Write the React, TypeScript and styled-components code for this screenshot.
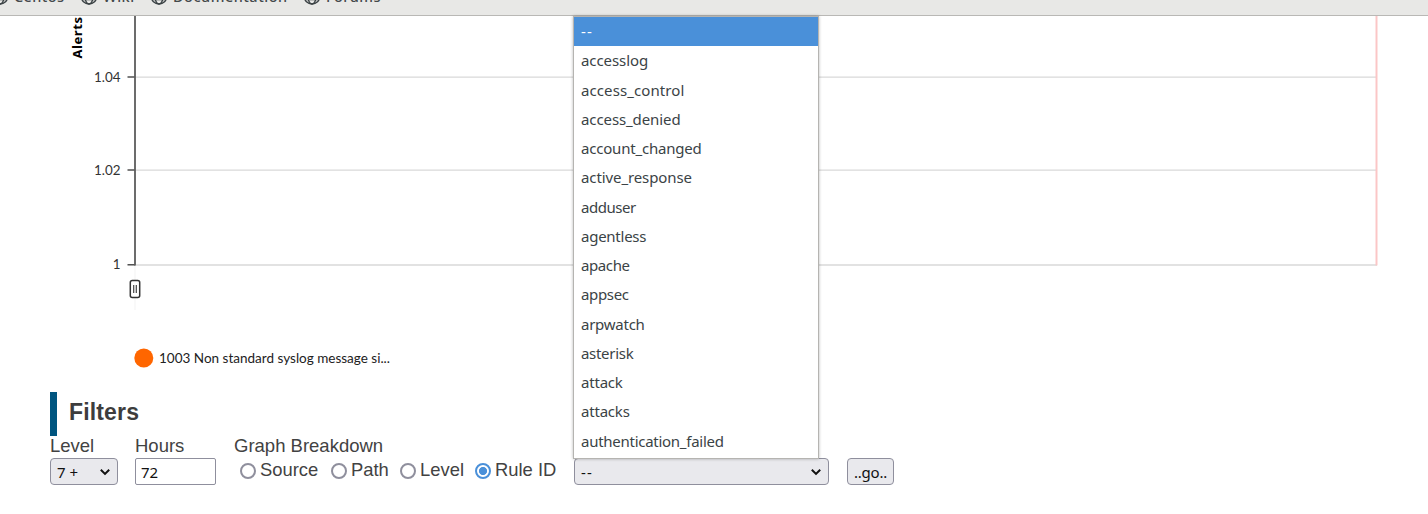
import React from "react";
import styled, { createGlobalStyle } from "styled-components";

const GlobalStyle = createGlobalStyle`
  * { box-sizing: border-box; }
  body { margin: 0; background: #fff; overflow: hidden; }
`;

const Page = styled.div`
  width: 1428px;
  height: 514px;
  overflow: hidden;
  background: #fff;
  font-family: "Liberation Sans", Arial, sans-serif;
  color: #424242;
`;

const BookmarksBar = styled.nav`
  height: 16px;
  display: flex;
  align-items: flex-end;
  background: #e8e8e6;
  border-bottom: 1px solid #b9b8b5;
  overflow: hidden;
  padding-bottom: 9px;
`;

const Bookmark = styled.a<{ $width: number; $spacing: number }>`
  flex: none;
  width: ${(p) => p.$width}px;
  height: 18px;
  display: flex;
  align-items: center;
  gap: 5px;
  font: 500 14.5px/16px "Noto Sans", sans-serif;
  letter-spacing: ${(p) => p.$spacing}px;
  color: #44494b;
  white-space: nowrap;
`;

const BookmarkName = styled.span`
  margin-bottom: 3px;
`;

const GlobeSvg = styled.svg`
  flex: none;
  width: 18px;
  height: 18px;
  fill: none;
  stroke: #3b4245;
  stroke-width: 1.4;
`;

const BookmarkRow = styled.div`
  display: flex;
  margin-left: -9px;
`;

const ChartSvg = styled.svg`
  display: block;
  width: 1428px;
  height: 376px;
  font-family: Lato, sans-serif;
`;

const Filters = styled.section`
  padding-left: 50px;
`;

const Heading = styled.h2`
  margin: 0;
  height: 44px;
  border-left: 7px solid #00557f;
  padding-left: 12px;
  font-size: 23px;
  letter-spacing: 0.15px;
  line-height: 41px;
  color: #3d3d3d;
`;

const FilterRow = styled.form`
  display: flex;
  align-items: flex-start;
`;

const Field = styled.div<{ $width: number }>`
  flex: none;
  width: ${(p) => p.$width}px;
`;

const Label = styled.div`
  height: 22px;
  font-size: 18.5px;
  line-height: 19px;
  white-space: nowrap;
`;

const Control = styled.div<{ $width: number }>`
  width: ${(p) => p.$width}px;
  height: 27px;
  display: flex;
  align-items: center;
  justify-content: space-between;
  padding: 0 6px;
  border: 1px solid #8f8f9d;
  border-radius: 4px;
  background: #e9e9ed;
  color: #111;
  font: 15px/24px "Noto Sans", sans-serif;
  white-space: nowrap;
`;

const TextInput = styled(Control)`
  padding: 0 5px;
  border-radius: 2px;
  background: #fff;
`;

const GoButton = styled(Control)`
  justify-content: center;
  padding: 0;
  letter-spacing: -0.2px;
`;

const Radios = styled.div`
  display: flex;
  padding: 1px 0 0 6px;
`;

const RadioOption = styled.label<{ $width: number }>`
  flex: none;
  width: ${(p) => p.$width}px;
  height: 22px;
  display: flex;
  align-items: center;
  gap: 4px;
  font-size: 18.4px;
  line-height: 22px;
  white-space: nowrap;
`;

const RadioDot = styled.span<{ $on?: boolean }>`
  flex: none;
  width: 16px;
  height: 16px;
  margin-top: 1px;
  border-radius: 50%;
  border: 2px solid ${(p) => (p.$on ? "#4a90d9" : "#8f8f9d")};
  background: ${(p) => (p.$on ? "radial-gradient(circle, #4a90d9 3.7px, #fff 4.4px)" : "#fff")};
`;

const SelectWrap = styled.div`
  position: relative;
  flex: none;
  width: 273px;
  padding-top: 22px;
`;

const Dashes = styled.span`
  letter-spacing: 1.2px;
`;

const ButtonWrap = styled.div`
  padding-top: 22px;
`;

const Menu = styled.ul`
  position: absolute;
  left: -1px;
  bottom: 26px;
  width: 246px;
  margin: 0;
  padding: 0 0 2px;
  list-style: none;
  background: #fff;
  border: 1px solid #b5b4b1;
  box-shadow: 0 0 3px rgba(0, 0, 0, 0.28);
`;

const MenuItem = styled.li<{ $active?: boolean; $spacing: number }>`
  height: ${(p) => (p.$active ? 29.7 : 29.28)}px;
  padding-left: 7px;
  font: 15px/29px "Noto Sans", sans-serif;
  letter-spacing: ${(p) => p.$spacing}px;
  color: ${(p) => (p.$active ? "#fff" : "#3b4346")};
  background: ${(p) => (p.$active ? "#4a90d9" : "transparent")};
  white-space: nowrap;
`;

const Globe = () => (
  <GlobeSvg viewBox="0 0 18 18">
    <circle cx="9" cy="8.2" r="7.8" />
    <ellipse cx="9" cy="8.2" rx="4" ry="7.8" />
    <path d="M1.2 8.2H16.8M2.6 11.6H15.4" />
  </GlobeSvg>
);

const Chevron = () => (
  <svg width="12" height="8" viewBox="0 0 12 8" fill="none" stroke="#111" strokeWidth="2">
    <path d="M1.8 1.7L6 5.9L10.2 1.7" />
  </svg>
);

const bookmarks = [
  { label: "Centos", width: 89, spacing: 0.4 },
  { label: "Wiki", width: 70, spacing: 0.5 },
  { label: "Documentation", width: 153, spacing: 0.5 },
  { label: "Forums", width: 90, spacing: 0.4 },
];

const groups: [string, number][] = [
  ["--", 1.2],
  ["accesslog", -0.07],
  ["access_control", 0.1],
  ["access_denied", -0.1],
  ["account_changed", -0.2],
  ["active_response", -0.1],
  ["adduser", -0.45],
  ["agentless", -0.25],
  ["apache", -0.4],
  ["appsec", -0.35],
  ["arpwatch", -0.25],
  ["asterisk", -0.3],
  ["attack", -0.2],
  ["attacks", -0.2],
  ["authentication_failed", -0.27],
];

const radios = [
  { label: "Source", width: 91 },
  { label: "Path", width: 69 },
  { label: "Level", width: 75 },
  { label: "Rule ID", width: 90 },
];

const ticks = [
  { label: "1.04", y: 61 },
  { label: "1.02", y: 154 },
  { label: "1", y: 248.8 },
];

const Chart = () => (
  <ChartSvg viewBox="0 0 1428 376">
    {ticks.map((t) => (
      <g key={t.label}>
        <path d={`M135 ${t.y + 0.2}H1377`} stroke="#d9d9d9" strokeWidth="1.3" />
        <path d={`M127.5 ${t.y}H135`} stroke="#333" strokeWidth="1.3" />
        <text x="120.5" y={t.y + 4.6} textAnchor="end" fontSize="13.4" fill="#333">
          {t.label}
        </text>
      </g>
    ))}
    <path d="M135 0V249.4" stroke="#5c5c5c" strokeWidth="1.8" />
    <path d="M1376.5 0V249.4" stroke="#fbc6c6" strokeWidth="2" />
    <path d="M135 250V294" stroke="#f3f3f3" />
    <text
      transform="translate(81.5 42.5) rotate(-90)"
      fontFamily="Noto Sans, sans-serif"
      fontSize="13"
      fontWeight="700"
      fill="#000"
      textLength="41.5"
    >
      Alerts
    </text>
    <rect x="130.3" y="264.5" width="9.4" height="17" rx="2" fill="#fff" stroke="#333" strokeWidth="1.5" />
    <path d="M133.7 269V277M136.3 269V277" stroke="#444" strokeWidth="1.2" />
    <circle cx="143.8" cy="342" r="9.5" fill="#ff6600" />
    <text x="159" y="346.5" fontSize="12.8" fill="#222" textLength="231" lengthAdjust="spacingAndGlyphs">
      1003 Non standard syslog message si...
    </text>
  </ChartSvg>
);

export default function App() {
  return (
    <Page>
      <GlobalStyle />
      <BookmarksBar>
        <BookmarkRow>
          {bookmarks.map((b) => (
            <Bookmark key={b.label} $width={b.width} $spacing={b.spacing}>
              <Globe />
              <BookmarkName>{b.label}</BookmarkName>
            </Bookmark>
          ))}
        </BookmarkRow>
      </BookmarksBar>
      <Chart />
      <Filters>
        <Heading>Filters</Heading>
        <FilterRow>
          <Field $width={85}>
            <Label>Level</Label>
            <Control $width={68}>
              7 +<Chevron />
            </Control>
          </Field>
          <Field $width={99}>
            <Label>Hours</Label>
            <TextInput $width={81}>72</TextInput>
          </Field>
          <Field $width={340}>
            <Label>Graph Breakdown</Label>
            <Radios>
              {radios.map((r) => (
                <RadioOption key={r.label} $width={r.width}>
                  <RadioDot $on={r.label === "Rule ID"} />
                  {r.label}
                </RadioOption>
              ))}
            </Radios>
          </Field>
          <SelectWrap>
            <Control $width={255}>
              <Dashes>--</Dashes>
              <Chevron />
            </Control>
            <Menu>
              {groups.map(([name, spacing]) => (
                <MenuItem key={name} $active={name === "--"} $spacing={spacing}>
                  {name}
                </MenuItem>
              ))}
            </Menu>
          </SelectWrap>
          <ButtonWrap>
            <GoButton $width={47}>..go..</GoButton>
          </ButtonWrap>
        </FilterRow>
      </Filters>
    </Page>
  );
}
